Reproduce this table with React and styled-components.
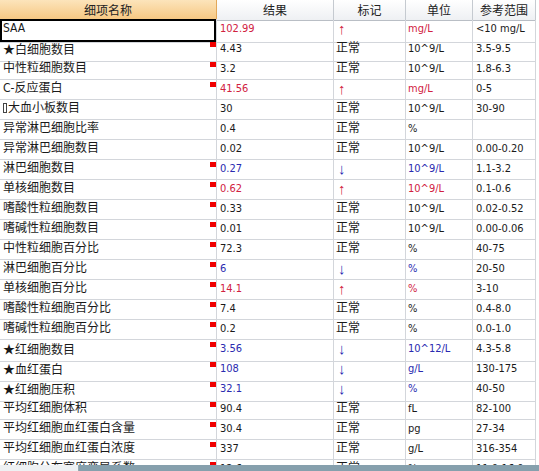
import React from "react";
import styled, { createGlobalStyle, css } from "styled-components";

const GlobalStyle = createGlobalStyle`
  body {
    margin: 0;
    background: #ffffff;
    font-family: "DejaVu Sans Condensed", "Liberation Sans", "Noto Sans CJK SC", sans-serif;
    color: #1a1a1a;
  }
`;

const COLS = "217px 117px 72px 67px 63px";
const GRID = "#d3d6db";

const Sheet = styled.div`
  width: 539px;
  height: 471px;
  display: flex;
  flex-direction: column;
  overflow: hidden;
`;

const Grid = styled.div`
  height: 465px;
  overflow: hidden;
`;

const HeaderRow = styled.div`
  display: grid;
  grid-template-columns: ${COLS};
  height: 20px;
`;

const HeadCell = styled.div`
  border-right: 1px solid #c5cad0;
  border-bottom: 1px solid #b9bec5;
  background: linear-gradient(#ffffff, #eef0f3);
  font-family: "Noto Sans CJK SC", sans-serif;
  font-size: 12px;
  line-height: 20px;
  text-align: center;
  color: #222;
  ${({ $active }) =>
    $active &&
    css`
      background: linear-gradient(#fce4bb, #f6c680);
      border-right-color: #e2a85a;
      border-bottom-color: #e2a85a;
    `}
`;

const Row = styled.div`
  display: grid;
  grid-template-columns: ${COLS};
  height: 20px;
`;

const tones = {
  red: "#d1213f",
  blue: "#2a2ab0",
  plain: "#1a1a1a",
};

const Cell = styled.div`
  position: relative;
  border-right: 1px solid ${GRID};
  border-bottom: 1px solid ${GRID};
  padding: 0 0 2px ${({ $pad }) => $pad ?? 3}px;
  font-size: ${({ $size }) => $size ?? 11}px;
  line-height: 17px;
  white-space: nowrap;
  overflow: hidden;
  color: ${({ $tone }) => tones[$tone] || tones.plain};
`;

const NameCell = styled(Cell)`
  overflow: visible;
  ${({ $flag }) =>
    $flag &&
    css`
      &::after {
        content: "";
        position: absolute;
        top: 2px;
        right: 0;
        width: 6px;
        height: 5px;
        background: #f00000;
      }
    `}
  ${({ $active }) =>
    $active &&
    css`
      box-shadow: inset 0 0 0 2px #000;
      margin-top: -1px;
      height: 21px;
      line-height: 19px;
    `}
`;

const Star = styled.span`
  font-family: "Noto Sans CJK SC", sans-serif;
  font-size: 12px;
`;

const Arrow = styled.span`
  font-family: "Liberation Sans", sans-serif;
  font-size: 15px;
  padding-left: 2px;
`;

const Box = styled.span`
  display: inline-block;
  width: 2px;
  height: 8px;
  border: 1px solid #444;
  margin-right: 1px;
  vertical-align: -1px;
`;

const BottomBar = styled.div`
  height: 6px;
  display: flex;
`;

const Tab = styled.div`
  width: 78px;
  background: #eef1f3;
  border-right: 1px solid #9aa8b0;
`;

const Track = styled.div`
  flex: 1;
  background: #86a0ad;
`;

const rows = [
  ["SAA", "102.99", "up", "mg/L", "<10 mg/L", "red", false],
  ["★白细胞数目", "4.43", "ok", "10^9/L", "3.5-9.5", "plain", true],
  ["中性粒细胞数目", "3.2", "ok", "10^9/L", "1.8-6.3", "plain", true],
  ["C-反应蛋白", "41.56", "up", "mg/L", "0-5", "red", true],
  ["▯大血小板数目", "30", "ok", "10^9/L", "30-90", "plain", false],
  ["异常淋巴细胞比率", "0.4", "ok", "%", "", "plain", false],
  ["异常淋巴细胞数目", "0.02", "ok", "10^9/L", "0.00-0.20", "plain", false],
  ["淋巴细胞数目", "0.27", "down", "10^9/L", "1.1-3.2", "blue", true],
  ["单核细胞数目", "0.62", "up", "10^9/L", "0.1-0.6", "red", true],
  ["嗜酸性粒细胞数目", "0.33", "ok", "10^9/L", "0.02-0.52", "plain", true],
  ["嗜碱性粒细胞数目", "0.01", "ok", "10^9/L", "0.00-0.06", "plain", true],
  ["中性粒细胞百分比", "72.3", "ok", "%", "40-75", "plain", true],
  ["淋巴细胞百分比", "6", "down", "%", "20-50", "blue", true],
  ["单核细胞百分比", "14.1", "up", "%", "3-10", "red", true],
  ["嗜酸性粒细胞百分比", "7.4", "ok", "%", "0.4-8.0", "plain", true],
  ["嗜碱性粒细胞百分比", "0.2", "ok", "%", "0.0-1.0", "plain", true],
  ["★红细胞数目", "3.56", "down", "10^12/L", "4.3-5.8", "blue", true],
  ["★血红蛋白", "108", "down", "g/L", "130-175", "blue", true],
  ["★红细胞压积", "32.1", "down", "%", "40-50", "blue", true],
  ["平均红细胞体积", "90.4", "ok", "fL", "82-100", "plain", true],
  ["平均红细胞血红蛋白含量", "30.4", "ok", "pg", "27-34", "plain", true],
  ["平均红细胞血红蛋白浓度", "337", "ok", "g/L", "316-354", "plain", true],
  ["红细胞分布宽度变异系数", "12.6", "ok", "%", "11.0-16.0", "plain", true],
];

const Name = ({ text }) => {
  if (text.startsWith("★"))
    return (
      <>
        <Star>★</Star>
        {text.slice(1)}
      </>
    );
  if (text.startsWith("▯"))
    return (
      <>
        <Box />
        {text.slice(1)}
      </>
    );
  return text;
};

const Mark = ({ kind }) => {
  if (kind === "up") return <Arrow>↑</Arrow>;
  if (kind === "down") return <Arrow>↓</Arrow>;
  return "正常";
};

const App = () => {
  return (
    <>
      <GlobalStyle />
      <Sheet>
        <Grid>
          <HeaderRow>
            <HeadCell $active>细项名称</HeadCell>
            <HeadCell>结果</HeadCell>
            <HeadCell>标记</HeadCell>
            <HeadCell>单位</HeadCell>
            <HeadCell>参考范围</HeadCell>
          </HeaderRow>
          {rows.map(([name, value, mark, unit, range, tone, flag], i) => (
            <Row key={i}>
              <NameCell $size={12} $flag={flag} $active={i === 0}>
                <Name text={name} />
              </NameCell>
              <Cell $tone={tone}>{value}</Cell>
              <Cell $size={12} $pad={2} $tone={mark === "ok" ? "plain" : tone}>
                <Mark kind={mark} />
              </Cell>
              <Cell $pad={2} $tone={tone}>{unit}</Cell>
              <Cell>{range}</Cell>
            </Row>
          ))}
        </Grid>
        <BottomBar>
          <Tab />
          <Track />
        </BottomBar>
      </Sheet>
    </>
  );
};

export default App;
